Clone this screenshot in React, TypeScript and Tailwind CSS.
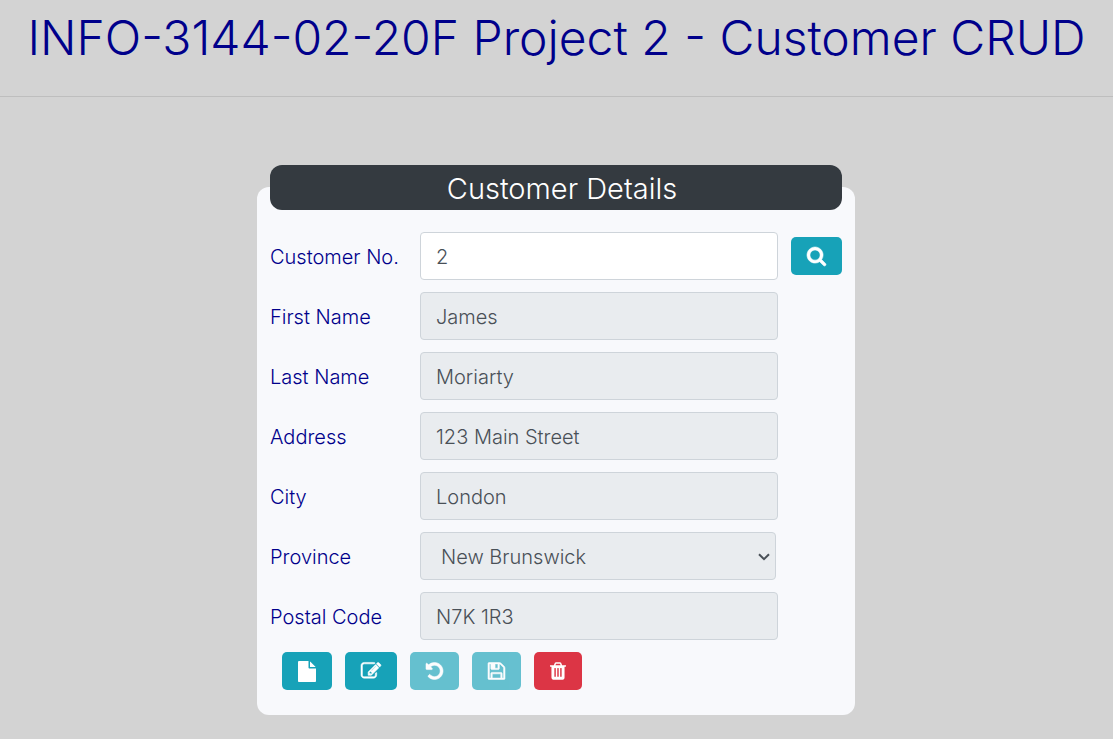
import { useState } from "react";
import type { ReactNode } from "react";

type IconName = "search" | "file" | "edit" | "undo" | "save" | "trash";

const ICONS: Record<IconName, { viewBox: string; size: string; d: string; stroke?: number }> = {
  search: {
    viewBox: "64 128 1664 1664",
    size: "h-[19px] w-[19px]",
    stroke: 50,
    d: "M1216 832q0-185-131.5-316.5t-316.5-131.5-316.5 131.5-131.5 316.5 131.5 316.5 316.5 131.5 316.5-131.5 131.5-316.5zm512 832q0 52-38 90t-90 38q-54 0-90-38l-343-342q-179 124-399 124-143 0-273.5-55.5t-225-150-150-225-55.5-273.5 55.5-273.5 150-225 225-150 273.5-55.5 273.5 55.5 225 150 150 225 55.5 273.5q0 220-124 399l343 343q37 37 37 90z",
  },
  file: {
    viewBox: "128 0 1536 1792",
    size: "h-[21px] w-[18px]",
    d: "M1152 512v-472q22 14 36 28l408 408q14 14 28 36h-472zm-128 32q0 40 28 68t68 28h544v1056q0 40-28 68t-68 28h-1344q-40 0-68-28t-28-68v-1600q0-40 28-68t68-28h800v544z",
  },
  edit: {
    viewBox: "0 0 1792 1792",
    size: "h-5 w-5",
    stroke: 50,
    d: "M888 1184l116-116-152-152-116 116v56h96v96h56zm440-720q-16-16-33 1l-350 350q-17 17-1 33t33-1l350-350q17-17 1-33zm80 594v190q0 119-84.5 203.5t-203.5 84.5h-832q-119 0-203.5-84.5t-84.5-203.5v-832q0-119 84.5-203.5t203.5-84.5h832q63 0 117 25 15 7 18 23 3 17-9 29l-49 49q-14 14-32 8-23-6-45-6h-832q-66 0-113 47t-47 113v832q0 66 47 113t113 47h832q66 0 113-47t47-113v-126q0-13 9-22l64-64q15-15 35-7t20 29zm-96-738l288 288-672 672h-288v-288zm444 132l-92 92-288-288 92-92q28-28 68-28t68 28l152 152q28 28 28 68t-28 68z",
  },
  undo: {
    viewBox: "128 128 1536 1536",
    size: "h-[18px] w-[17px]",
    stroke: 50,
    d: "M1664 896q0 156-61 298t-164 245-245 164-298 61q-172 0-327-72.5t-264-204.5q-7-10-6.5-22.5t8.5-20.5l137-138q10-9 25-9 16 2 23 12 73 95 179 147t225 52q104 0 198.5-40.5t163.5-109.5 109.5-163.5 40.5-198.5-40.5-198.5-109.5-163.5-163.5-109.5-198.5-40.5q-98 0-188 35.5t-160 101.5l137 138q31 30 14 69-17 40-59 40h-448q-26 0-45-19t-19-45v-448q0-42 40-59 39-17 69 14l130 129q107-101 244.5-156.5t284.5-55.5q156 0 298 61t245 164 164 245 61 298z",
  },
  save: {
    viewBox: "128 128 1536 1536",
    size: "h-[18px] w-[17px]",
    stroke: 50,
    d: "M512 1536h768v-384h-768v384zm896 0h128v-896q0-14-10-38.5t-20-34.5l-281-281q-10-10-34-20t-39-10v416q0 40-28 68t-68 28h-576q-40 0-68-28t-28-68v-416h-128v1280h128v-416q0-40 28-68t68-28h832q40 0 68 28t28 68v416zm-384-928v-320q0-13-9.5-22.5t-22.5-9.5h-192q-13 0-22.5 9.5t-9.5 22.5v320q0 13 9.5 22.5t22.5 9.5h192q13 0 22.5-9.5t9.5-22.5zm640 32v928q0 40-28 68t-68 28h-1344q-40 0-68-28t-28-68v-1344q0-40 28-68t68-28h928q40 0 88 20t76 48l280 280q28 28 48 76t20 88z",
  },
  trash: {
    viewBox: "192 128 1408 1536",
    size: "h-[18px] w-4",
    d: "M704 1376v-704q0-14-9-23t-23-9h-64q-14 0-23 9t-9 23v704q0 14 9 23t23 9h64q14 0 23-9t9-23zm256 0v-704q0-14-9-23t-23-9h-64q-14 0-23 9t-9 23v704q0 14 9 23t23 9h64q14 0 23-9t9-23zm256 0v-704q0-14-9-23t-23-9h-64q-14 0-23 9t-9 23v704q0 14 9 23t23 9h64q14 0 23-9t9-23zm-544-992h448l-48-117q-7-9-17-11h-317q-10 2-17 11zm928 32v64q0 14-9 23t-23 9h-96v948q0 83-47 143.5t-113 60.5h-832q-66 0-113-58.5t-47-141.5v-952h-96q-14 0-23-9t-9-23v-64q0-14 9-23t23-9h309l70-167q15-37 54-63t79-26h320q40 0 79 26t54 63l70 167h309q14 0 23 9t9 23z",
  },
};

function Icon({ name }: { name: IconName }) {
  const { viewBox, size, d, stroke = 0 } = ICONS[name];
  return (
    <svg
      viewBox={viewBox}
      className={`overflow-visible ${size}`}
      fill="currentColor"
      stroke="currentColor"
      strokeWidth={stroke}
      aria-hidden="true"
    >
      <path d={d} />
    </svg>
  );
}

function IconButton({
  icon,
  label,
  danger = false,
  disabled = false,
}: {
  icon: IconName;
  label: string;
  danger?: boolean;
  disabled?: boolean;
}) {
  return (
    <button
      type="button"
      aria-label={label}
      disabled={disabled}
      className={`flex h-[38px] shrink-0 items-center justify-center rounded-[5px] px-4 text-white disabled:opacity-65 ${
        danger ? "bg-[#dc3545]" : "bg-[#17a2b8]"
      }`}
    >
      <Icon name={icon} />
    </button>
  );
}

const FIELD =
  "h-12 w-full rounded border border-[#ced4da] bg-white pt-[2px] text-xl text-[#495057] opacity-100 disabled:bg-[#e9ecef]";

function Row({ id, label, children, action }: { id: string; label: string; children: ReactNode; action?: ReactNode }) {
  return (
    <div className="grid grid-cols-[137px_minmax(0,1fr)_51px] items-center gap-x-[13px]">
      <label htmlFor={id} className="whitespace-nowrap pt-[2px] text-xl text-[#00008b]">
        {label}
      </label>
      {children}
      {action}
    </div>
  );
}

function TextRow({ id, label, value }: { id: string; label: string; value: string }) {
  return (
    <Row id={id} label={label}>
      <input id={id} type="text" defaultValue={value} disabled className={`${FIELD} px-[15px]`} />
    </Row>
  );
}

export default function App() {
  const [customerNo, setCustomerNo] = useState("2");

  return (
    <div className="min-h-screen bg-[#d3d3d3] pb-6 font-['Inter',sans-serif] font-light">
      <header className="border-b border-[#bebebe] px-4 pt-2 pb-7">
        <h1 className="text-center text-5xl leading-[60px] text-[#00008b]">
          INFO-3144-02-20F Project 2 - Customer CRUD
        </h1>
      </header>

      <div className="pt-[90px] pr-px">
        <main className="mx-auto max-w-[598px] rounded-xl bg-[#f8f9fc] px-[13px] pb-[25px]">
          <h2 className="-translate-y-[22px] rounded-xl bg-[#343a40] pt-[2px] pl-3 text-center text-[29px] leading-[43px] text-white">
            Customer Details
          </h2>

          <form className="flex flex-col gap-3" onSubmit={(e) => e.preventDefault()}>
            <Row id="customer-no" label="Customer No." action={<IconButton icon="search" label="Find customer" />}>
              <input
                id="customer-no"
                type="text"
                value={customerNo}
                onChange={(e) => setCustomerNo(e.target.value)}
                className={`${FIELD} px-[15px]`}
              />
            </Row>
            <TextRow id="first-name" label="First Name" value="James" />
            <TextRow id="last-name" label="Last Name" value="Moriarty" />
            <TextRow id="address" label="Address" value="123 Main Street" />
            <TextRow id="city" label="City" value="London" />
            <Row id="province" label="Province">
              <div className="relative mr-[2px]">
                <select id="province" disabled defaultValue="NB" className={`${FIELD} appearance-none pr-8 pl-5`}>
                  <option value="NB">New Brunswick</option>
                  <option value="ON">Ontario</option>
                  <option value="QC">Quebec</option>
                </select>
                <svg
                  viewBox="0 0 12 8"
                  className="pointer-events-none absolute top-[21px] right-[6px] h-2 w-3"
                  fill="none"
                  stroke="#495057"
                  strokeWidth="2"
                  aria-hidden="true"
                >
                  <path d="M1 1.2 6 6.2 11 1.2" />
                </svg>
              </div>
            </Row>
            <TextRow id="postal-code" label="Postal Code" value="N7K 1R3" />

            <div className="flex gap-[13px] pl-3">
              <IconButton icon="file" label="New customer" />
              <IconButton icon="edit" label="Edit customer" />
              <IconButton icon="undo" label="Undo changes" disabled />
              <IconButton icon="save" label="Save customer" disabled />
              <IconButton icon="trash" label="Delete customer" danger />
            </div>
          </form>
        </main>
      </div>
    </div>
  );
}
